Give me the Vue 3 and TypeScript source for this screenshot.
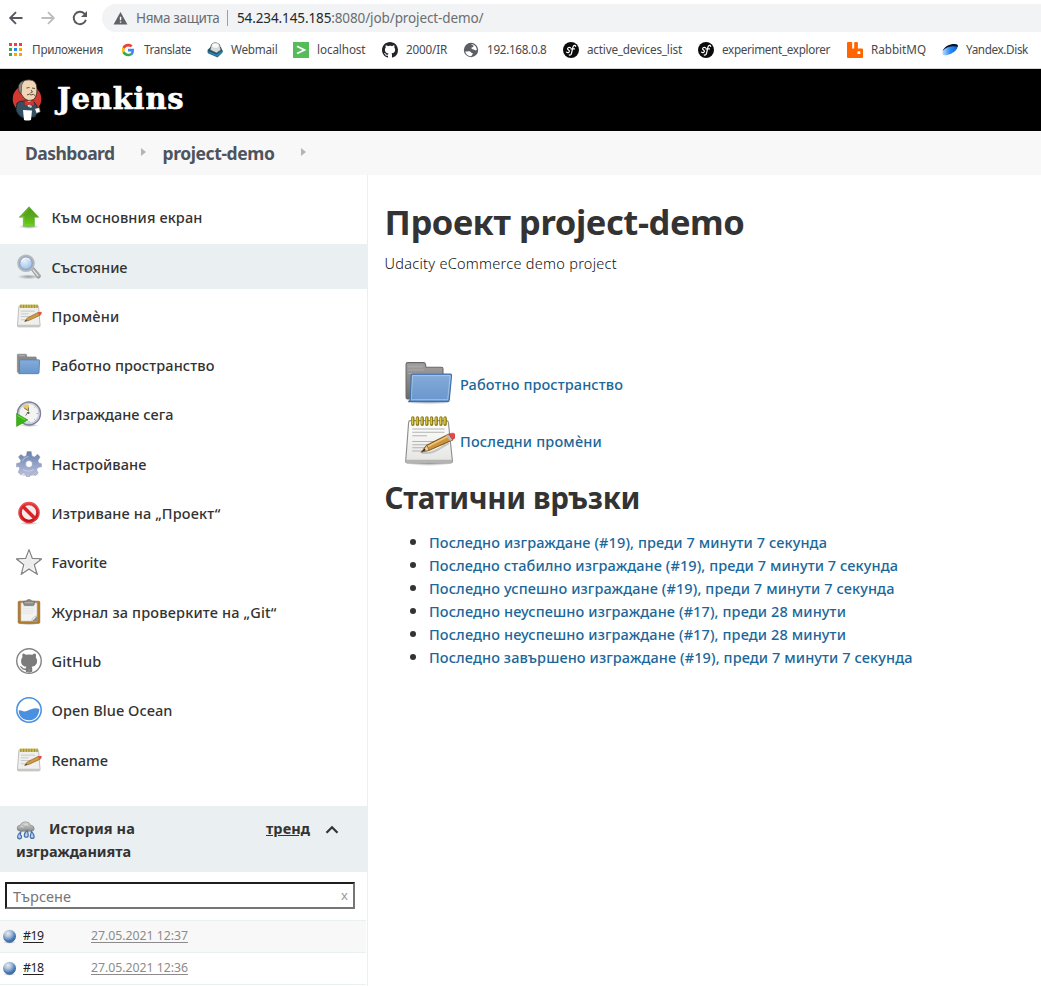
<script setup lang="ts">
interface Labelled {
  icon: string
  label: string
  width: number
}

const vFit = {
  mounted(el: HTMLElement, binding: { value: number }) {
    const count = (el.textContent ?? '').trim().length
    const natural = el.getBoundingClientRect().width
    el.style.letterSpacing = `${((binding.value - natural) / count).toFixed(4)}px`
  },
}

const bookmarks: Labelled[] = [
  { icon: 'apps', label: 'Приложения', width: 71 },
  { icon: 'google', label: 'Translate', width: 47 },
  { icon: 'webmail', label: 'Webmail', width: 46.5 },
  { icon: 'localhost', label: 'localhost', width: 48.5 },
  { icon: 'octocat', label: '2000/IR', width: 41 },
  { icon: 'globe', label: '192.168.0.8', width: 59.5 },
  { icon: 'symfony', label: 'active_devices_list', width: 95 },
  { icon: 'symfony', label: 'experiment_explorer', width: 108 },
  { icon: 'rabbit', label: 'RabbitMQ', width: 55 },
  { icon: 'yandex', label: 'Yandex.Disk', width: 62 },
]

const tasks: Labelled[] = [
  { icon: 'up', label: 'Към основния екран', width: 151 },
  { icon: 'search', label: 'Състояние', width: 76 },
  { icon: 'notepad-small', label: 'Промѐни', width: 68 },
  { icon: 'folder-small', label: 'Работно пространство', width: 163 },
  { icon: 'clock', label: 'Изграждане сега', width: 122 },
  { icon: 'gear', label: 'Настройване', width: 95 },
  { icon: 'stop', label: 'Изтриване на „Проект“', width: 169 },
  { icon: 'star', label: 'Favorite', width: 55.5 },
  { icon: 'clipboard', label: 'Журнал за проверките на „Git“', width: 225 },
  { icon: 'github', label: 'GitHub', width: 50 },
  { icon: 'ocean', label: 'Open Blue Ocean', width: 121 },
  { icon: 'notepad-small', label: 'Rename', width: 56.5 },
]

const shortcuts: Labelled[] = [
  { icon: 'folder', label: 'Работно пространство', width: 163 },
  { icon: 'notepad', label: 'Последни промѐни', width: 142 },
]

const permalinks = [
  { label: 'Последно изграждане (#19), преди 7 минути 7 секунда', width: 398 },
  { label: 'Последно стабилно изграждане (#19), преди 7 минути 7 секунда', width: 469 },
  { label: 'Последно успешно изграждане (#19), преди 7 минути 7 секунда', width: 465.5 },
  { label: 'Последно неуспешно изграждане (#17), преди 28 минути', width: 417 },
  { label: 'Последно неуспешно изграждане (#17), преди 28 минути', width: 417 },
  { label: 'Последно завършено изграждане (#19), преди 7 минути 7 секунда', width: 483.5 },
]

const builds = [
  { id: '#19', date: '27.05.2021 12:37' },
  { id: '#18', date: '27.05.2021 12:36' },
]
</script>

<template>
  <div class="page">
    <svg class="sprite" aria-hidden="true">
      <defs>
        <linearGradient id="gGreen" x1="0" y1="0" x2="0" y2="1"><stop offset="0" stop-color="#4c9c14" /><stop offset=".5" stop-color="#5aa81c" /><stop offset="1" stop-color="#63d411" /></linearGradient>
        <linearGradient id="gBlue" x1="0" y1="0" x2="0" y2="1"><stop offset="0" stop-color="#86abd9" /><stop offset="1" stop-color="#6796cd" /></linearGradient>
        <linearGradient id="gGrey" x1="0" y1="0" x2="0" y2="1"><stop offset="0" stop-color="#a2a2a2" /><stop offset="1" stop-color="#6a6a6a" /></linearGradient>
        <linearGradient id="gPaper" x1="0" y1="0" x2="0" y2="1"><stop offset="0" stop-color="#fff" /><stop offset="1" stop-color="#e4e4e2" /></linearGradient>
        <linearGradient id="gGear" x1="0" y1="0" x2="0" y2="1"><stop offset="0" stop-color="#6680aa" /><stop offset="1" stop-color="#bfc3e4" /></linearGradient>
        <linearGradient id="gRed" x1="0" y1="0" x2="0" y2="1"><stop offset="0" stop-color="#e23a3a" /><stop offset="1" stop-color="#c60f13" /></linearGradient>
        <linearGradient id="gCloud" x1="0" y1="0" x2="0" y2="1"><stop offset="0" stop-color="#dcdcda" /><stop offset="1" stop-color="#898b88" /></linearGradient>
        <radialGradient id="gLens" cx=".4" cy=".35" r=".7"><stop offset="0" stop-color="#e6f1fc" /><stop offset="1" stop-color="#8fb6e3" /></radialGradient>
        <radialGradient id="gBall" cx=".38" cy=".28" r=".8"><stop offset="0" stop-color="#e4ecec" /><stop offset=".35" stop-color="#a9c0d6" /><stop offset=".72" stop-color="#4377b4" /><stop offset="1" stop-color="#305e98" /></radialGradient>
        <radialGradient id="gShade"><stop offset="0" stop-color="#000" stop-opacity=".35" /><stop offset="1" stop-color="#000" stop-opacity="0" /></radialGradient>
        <linearGradient id="gDisk" x1="0" y1="0" x2="1" y2="0"><stop offset="0" stop-color="#c4e3ff" /><stop offset=".5" stop-color="#2f8cf5" /><stop offset="1" stop-color="#0763d8" /></linearGradient>
        <clipPath id="cRing"><circle cx="24" cy="24" r="21" /></clipPath>
      </defs>

      <symbol id="apps" viewBox="0 0 16 16">
        <path fill="#ea4335" d="M2 1h3v3H2zM7 1h3v3H7zM12 1h3v3h-3z" />
        <path fill="#34a853" d="M2 6h3v3H2zM2 11h3v3H2z" /><path fill="#2a84f0" d="M7 6h3v3H7z" />
        <path fill="#f9a602" d="M12 6h3v3h-3zM7 11h3v3H7zM12 11h3v3h-3z" />
      </symbol>
      <symbol id="google" viewBox="0 0 48 48">
        <path fill="#EA4335" d="M24 13.500c3.540 0 6.210 1.360 7.900 2.500l5.850-5.800C34.500 7.300 29.900 5.500 24 5.500c-7.500 0-13.700 4.300-16.600 10.400l6.800 5.200C15.700 16.700 19.500 13.500 24 13.500z" />
        <path fill="#4285F4" d="M42 24.500c0-1.400-.1-2.700-.4-4H24v8h10.300c-.5 2.400-1.900 4.300-3.900 5.700l6.500 5.100C40.400 35.800 42 30.600 42 24.500z" />
        <path fill="#FBBC05" d="M14.200 28c-.8-2.300-.8-4.700 0-6.900l-6.800-5.200c-2.400 5.400-2.400 11.900 0 17.300z" />
        <path fill="#34A853" d="M24 43c5.200 0 9.700-1.600 12.900-4.500l-6.500-5.100c-4.800 3.200-13.600 2.100-16.200-5.400l-6.800 5.200C10.300 39.100 16.600 43 24 43z" />
      </symbol>
      <symbol id="webmail" viewBox="0 0 16 16">
        <path d="M.6 8L4 4.500l10 .5 1.500 4.500-5 5.500L2 11z" fill="#14506f" /><path d="M.8 8.500l8.700 3.500 5.700-4 .1 2.500-4.800 4.500-9.500-4z" fill="#2686b8" stroke="#123f58" stroke-width=".5" />
        <path d="M3 8L4.500 2.500Q8-1 12.500 2.500L14 8l-4.500 3z" fill="#d5dadb" stroke="#4b5558" stroke-width=".7" /><ellipse cx="8.500" cy="3.500" rx="3.300" ry="2.300" fill="#f8f9f9" />
      </symbol>
      <symbol id="localhost" viewBox="0 0 16 16"><path fill="#56bb59" d="M0 0h16v16H0z" /><path d="M4 4.300l7.500 3.600L4 11.500" fill="none" stroke="#fff" stroke-width="1.700" /></symbol>
      <symbol id="octocat" viewBox="0 0 16 16"><path fill="#20262b" d="M8 0C3.580 0 0 3.580 0 8c0 3.540 2.290 6.530 5.470 7.590.4.070.55-.17.55-.38 0-.19-.01-.82-.01-1.490-2.010.37-2.530-.49-2.690-.94-.09-.23-.48-.94-.82-1.130-.28-.15-.68-.52-.01-.53.63-.01 1.080.58 1.230.82.72 1.210 1.870.87 2.330.66.07-.52.28-.87.51-1.070-1.780-.2-3.640-.89-3.640-3.950 0-.87.31-1.590.82-2.150-.08-.2-.36-1.020.08-2.120 0 0 .67-.21 2.200.82.64-.18 1.320-.27 2-.27s1.360.09 2 .27c1.530-1.040 2.200-.82 2.200-.82.44 1.100.16 1.920.08 2.120.51.56.82 1.270.82 2.150 0 3.070-1.870 3.750-3.650 3.950.29.25.54.73.54 1.480 0 1.070-.01 1.930-.01 2.200 0 .21.15.46.55.38A8.010 8.010 0 0 0 16 8c0-4.420-3.580-8-8-8z" /></symbol>
      <symbol id="globe" viewBox="0 0 16 16">
        <circle cx="8" cy="8" r="7.200" fill="#5b5f65" />
        <path d="M2.200 9.500c2 .2 2.500-.3 4-.2 1.800.2 1.500 1.700 3 1.800 1.200.1.300 1.700-.8 3-3.300.4-5.700-1.900-6.200-4.600zM8 2.300c.8 1 2.700.6 2.500 2-.2 1.300-2.300.7-2.100 2 .2 1.200 2.300.8 3.300 1.700.8.800 1.600.4 2.100-.2C13.700 4.600 11.300 2 8 2.300z" fill="#fff" />
      </symbol>
      <symbol id="symfony" viewBox="0 0 16 16">
        <circle cx="8" cy="8" r="8" fill="#0b0b0b" />
        <path d="M7.400 5.700c-1-.7-2.800-.1-2.800 1 0 1.300 2.100 1.200 1.800 2.700-.2 1.200-2 1.700-2.800.7M12.700 4.300c-.4-1.500-2.200-1.300-2.800.8L8.600 11c-.4 1.900-1.400 2.500-2.300 1.900M8 6.900h3.500" fill="none" stroke="#fff" stroke-width="1.200" stroke-linecap="round" />
      </symbol>
      <symbol id="rabbit" viewBox="0 0 16 16"><path fill="#ff6600" d="M0 1Q0 0 1 0h3.300q.9 0 .9 1v5.500h2V1q0-1 .9-1H10q.9 0 .9 1v5.500H15q1 0 1 1V15q0 1-1 1H1q-1 0-1-1z" /><rect x="10.500" y="9.300" width="2.800" height="2.800" rx=".6" fill="#fff" /></symbol>
      <symbol id="yandex" viewBox="0 0 16 16"><path d="M.2 11C.5 6 7 2.300 12.500 2.300c4.300 0 3.600 3.500 1.500 5.700C11 12 .2 16 .2 11z" fill="url(#gDisk)" /><path d="M.5 9C2.500 4.500 7.500 2 12.500 2c3 0 4 1.300 3 2.700-4-1.200-11-.5-15 4.300z" fill="#071321" /></symbol>

      <symbol id="up" viewBox="0 0 48 48"><ellipse cx="24" cy="42" rx="20" ry="4" fill="url(#gShade)" /><path d="M24 5L6 24.500h7.500V41h20.500V24.500h8z" fill="url(#gGreen)" stroke="#5ba52a" stroke-width="1" /><path d="M24 8L10 23h5v16h17" fill="none" stroke="#9bdc60" stroke-width="1.200" opacity=".6" /></symbol>
      <symbol id="search" viewBox="0 0 48 48">
        <ellipse cx="23" cy="42" rx="21" ry="4.500" fill="url(#gShade)" /><path d="M28 29l5-4 12 14q1 6-5 6z" fill="#a9a9a7" stroke="#888a85" /><path d="M31 29l10 12" stroke="#e8e8e8" stroke-width="2" />
        <circle cx="18.500" cy="17" r="14" fill="url(#gLens)" stroke="#b4b8bb" stroke-width="4.500" /><circle cx="18.500" cy="17" r="11.500" fill="none" stroke="#668dbd" stroke-width="1.200" /><path d="M10 14c3-7 11-8 16-2" fill="none" stroke="#fff" stroke-width="2" opacity=".7" />
      </symbol>
      <symbol id="notepad" viewBox="0 0 48 48">
        <ellipse cx="23" cy="45.500" rx="22" ry="2.500" fill="url(#gShade)" />
        <path d="M5 4.500h35q1.500 0 1.700 2L45.500 43q0 2-2 2h-41q-2 0-1.800-2L3.500 6q.2-1.500 1.500-1.500z" fill="url(#gPaper)" stroke="#8d8f8c" stroke-width="1.100" /><path d="M1 42h44v2q0 1.200-1.500 1.200H2.300q-1.500 0-1.300-1.400z" fill="#b4b4b2" />
        <path d="M7 12.500h31M7 15.500h31M7 19h14M7 24.500h31M7 27.500h31M7 30.500h19M7 33.500h12" stroke="#b2b4b1" />
        <path d="M7.500 2v6M12 2v6M16.500 2v6M21 2v6M25.500 2v6M30 2v6M34.500 2v6M38.500 2v6" stroke="#8c7a16" stroke-width="3.300" stroke-linecap="round" /><path d="M7.200 2v5.500M11.700 2v5.500M16.200 2v5.500M20.700 2v5.500M25.200 2v5.500M29.700 2v5.500M34.200 2v5.500M38.200 2v5.500" stroke="#dbc943" stroke-width="1.400" stroke-linecap="round" />
        <path d="M16 35q7 2 16-3l10-6" stroke="#777" stroke-width="2" opacity=".35" fill="none" />
        <path d="M16 34.500l5-6.500L42 17.500l3.500 5.500-22.500 10z" fill="#cc9538" stroke="#80551b" stroke-width="1" /><path d="M22 29.300L42 19" stroke="#efc880" stroke-width="1.500" /><path d="M16 34.500l5-6.500 2 5z" fill="#ead3aa" stroke="#80551b" stroke-width=".6" /><path d="M16 34.500l3-3.200.8 1.500z" fill="#222" /><path d="M39.500 18.800l2.700-1.300 3.500 5.300-2.500 1.200z" fill="#bbb" /><path d="M42 17.500q5-2.300 6.300.5 1 3-2.600 4.800z" fill="#e54848" stroke="#b32c2c" stroke-width=".5" />
      </symbol>
      <symbol id="notepad-small" viewBox="0 0 48 48">
        <path d="M7 5h33q1.500 0 1.700 2L44.500 42q0 2-2 2h-38q-2 0-1.800-2L5.300 7q.2-2 1.700-2z" fill="#efefed" stroke="#bcbcba" stroke-width="1.800" /><path d="M3 40h41v2.500q0 2-2 2H4.500q-2 0-1.700-2z" fill="#c6c6c4" />
        <path d="M7 3h33v6H7z" fill="#c9ba52" /><path d="M9 3v6M14 3v6M19 3v6M24 3v6M29 3v6M34 3v6M39 3v6" stroke="#a2932f" stroke-width="2" />
        <path d="M9 15h26M9 20h14M9 25h24M9 31h9" stroke="#c8c8c6" stroke-width="1.800" />
        <path d="M16 34l5-6.500 20-10 3.500 5-20.500 9.500z" fill="#d09b42" stroke="#9a6f2b" stroke-width="1.500" /><path d="M16 34l3-3.500 1.500 2z" fill="#333" /><path d="M40 17.500q6-3 7.500 0 .8 3-3.500 5.500z" fill="#e05544" />
      </symbol>
      <symbol id="folder" viewBox="0 0 48 48">
        <ellipse cx="23" cy="39.500" rx="23" ry="3.500" fill="url(#gShade)" /><path d="M2.700 2.500h15.500q1.300 0 1.500 2l.5 2.500H35q1.500 0 1.500 1.500V37.500h-34q-1.500 0-1.500-1.500V4q0-1.500 1.700-1.500z" fill="url(#gGrey)" stroke="#686868" /><path d="M3 6.500h14M3 9.500h15M3 13h32" stroke="#c1c1c1" opacity=".5" />
        <path d="M7.200 13.500h36.500q1 0 1 1.200L42.500 38q-.2 2-2 2H3.200q2-1 2.200-3L6 14.700q.1-1.200 1.200-1.200z" fill="url(#gBlue)" stroke="#3f6fae" stroke-width="1.100" /><path d="M7.200 15h36.200L41 38H6z" fill="none" stroke="#bfd5ef" stroke-width=".9" opacity=".65" />
      </symbol>
      <symbol id="folder-small" viewBox="0 0 48 48">
        <path d="M4 4h14q1.500 0 1.700 2l.5 3H36q1.500 0 1.500 1.500V38H4q-1.500 0-1.500-1.500v-31Q2.500 4 4 4z" fill="#8a8a8a" stroke="#777" /><path d="M5 7h12" stroke="#bbb" stroke-width="1.500" />
        <path d="M7.500 14.500h35q1 0 1 1.200L42.500 38q-.2 2-2 2H5q1.200-1 1.300-3l.2-21q.1-1.500 1-1.500z" fill="url(#gBlue)" stroke="#4f7db8" stroke-width="1.600" />
      </symbol>
      <symbol id="clock" viewBox="0 0 48 48">
        <ellipse cx="25" cy="45" rx="18" ry="3" fill="url(#gShade)" /><circle cx="24" cy="23" r="21" fill="#f3f3f1" stroke="#80829b" stroke-width="3" /><circle cx="24" cy="23" r="18.500" fill="none" stroke="#c8cadf" stroke-width="2.500" />
        <path d="M24 20L12 11q5-6 12-4z" fill="#e8cc60" /><path d="M15 13l8 5v-6M22 20l-4 7" fill="none" stroke="#666" stroke-width="1.600" /><circle cx="23" cy="22" r="2" fill="#555" />
        <path d="M24 37v3M38 23h3M34 12l2-2M34 34l2 2" stroke="#999" stroke-width="1.500" /><path d="M1 23l21 12L1 47z" fill="#36b513" stroke="#2d8b0b" /><path d="M3 27l14 8" stroke="#8ae362" stroke-width="1.500" />
      </symbol>
      <symbol id="gear" viewBox="0 0 48 48">
        <ellipse cx="24" cy="43.500" rx="20" ry="3.500" fill="url(#gShade)" />
        <path fill="url(#gGear)" stroke="#8791b6" stroke-width=".8" d="M20.500 1h7.500l1.500 8 4.500 2L40 6l4.500 5-4 7 1.500 4 5 1.500v5.500l-6.500 1.500-2.500 4 3 6-5 4.500-6.500-4-3.500 1.500-1 5.500h-5.500l-1-6-4-2-6 3.500-4.500-4.500 3-6.500-2-4L1 29.500V23l6.500-1.500L9 17.500 4.500 11 9 6.500l6 4 4-2z" />
        <circle cx="24" cy="24" r="6.500" fill="#fff" stroke="#8a96bb" stroke-width="1.200" /><path d="M12 18q4-7 11-8M13 34q10 6 20 0" fill="none" stroke="#e0e5f4" stroke-width="2" opacity=".5" />
      </symbol>
      <symbol id="stop" viewBox="0 0 48 48"><ellipse cx="24" cy="43" rx="18" ry="3" fill="url(#gShade)" /><circle cx="24" cy="23" r="16.500" fill="#f6eaea" stroke="url(#gRed)" stroke-width="6.500" /><path d="M12.500 11.500l23 23" stroke="#d72429" stroke-width="6.500" /><circle cx="24" cy="23" r="18.500" fill="none" stroke="#f29a9a" stroke-width=".9" opacity=".8" /></symbol>
      <symbol id="star" viewBox="0 0 48 48"><path d="M24 2l6 15.500 17 .8-13.500 10.500 5.500 17.500L24 36.800 10 46.300l4.500-17.500L1 18.300l17-.8z" fill="#ececec" stroke="#858585" stroke-width="2.600" /><path d="M24 6.500l4.600 13 13.500.6-10.800 8.400 3.800 13.400L24 34.300 12.900 42l3.900-13.500L6 20.100l13.500-.6z" fill="none" stroke="#fff" stroke-width="1.300" /></symbol>
      <symbol id="clipboard" viewBox="0 0 48 48">
        <ellipse cx="24" cy="46" rx="19" ry="2" fill="url(#gShade)" /><rect x="4" y="4" width="40" height="41" rx="2" fill="#b27b2d" stroke="#885b1a" /><path d="M9 7h30v34H9z" fill="#f3f3f2" stroke="#a8a8a5" /><path d="M12 14h23M12 18h21M12 22h23M12 26h20" stroke="#ddd" stroke-width="1.200" /><path d="M39 31l-10 10h10z" fill="#8b8d88" /><path d="M29 41q1-8 10-10" fill="#fff" stroke="#999" />
        <path d="M14 4h5q0-3 5-3t5 3h5v5q0 3-3 3H17q-3 0-3-3z" fill="#888a85" stroke="#646661" /><path d="M16 7h16" stroke="#c3c5c0" stroke-width="1.500" />
      </symbol>
      <symbol id="github" viewBox="0 0 48 48">
        <circle cx="24" cy="24" r="22.600" fill="#fff" stroke="#838383" stroke-width="2.600" />
        <g clip-path="url(#cRing)"><path d="M12 11q1-2 6 1.600 6-1.300 12 0Q35 9 36.500 11q1 3 0 6 4 5 1.500 12-2.500 5-9 5.500 1 2 1 5V46H18v-5.500q-6 1-8-3.500l-3-3q4-1 6 3 2 1.500 5 .8 0-2 1.500-3.300-7.500-.5-9.500-6-2-7 2-12-1-3 0-5.500z" fill="#7b7b7b" /><path d="M24 38v7" stroke="#9a9a9a" stroke-width="1.500" /></g>
      </symbol>
      <symbol id="ocean" viewBox="0 0 48 48"><circle cx="24" cy="24" r="22.500" fill="#fff" stroke="#4a90e2" stroke-width="2.800" /><path d="M5 25c5-2 7 4 15 1 7-3 14-7 23-4 0 12-8 21-19 21S5 36 5 25z" fill="#4a90e2" /></symbol>
      <symbol id="storm" viewBox="0 0 48 48">
        <path d="M11 26q-9-1-8-9 1-6 7-6Q14 2 24 2t13 9q8 0 9 8 0 7-8 7z" fill="url(#gCloud)" stroke="#777975" stroke-width="1.500" /><path d="M10 16q4-4 9 0M20 11q6-6 11 1" fill="none" stroke="#f4f4f4" stroke-width="2" opacity=".7" />
        <g fill="#b8d0ed" stroke="#4772aa" stroke-width="3"><path d="M12 28q-8 6-8 12a5 5 0 0 0 10 0q0-4-3-5zM28 24q-7 6-7 12a5 5 0 0 0 10 0q0-5-3-12zM39 26q-2 8-3 13a5 5 0 0 0 10 0q0-5-7-13z" /></g>
      </symbol>
      <symbol id="ball" viewBox="0 0 16 16"><ellipse cx="8" cy="14.200" rx="7" ry="1.600" fill="url(#gShade)" /><circle cx="8" cy="7.700" r="6.900" fill="url(#gBall)" /></symbol>
    </svg>

    <div class="browser">
      <div class="toolbar">
        <svg class="nav" viewBox="0 0 16 16"><path d="M14.500 8H2.500M8 2.200L2.200 8 8 13.800" /></svg>
        <svg class="nav faded" viewBox="0 0 16 16"><path d="M1.500 8h12M8 2.200L13.800 8 8 13.800" /></svg>
        <svg class="nav" viewBox="0 0 16 16"><path d="M13.900 9.800A6.200 6.200 0 1 1 12.400 3.600l1.300 1.500" /><path class="solid" d="M15 1v6H9z" /></svg>
        <div class="address">
          <svg class="warning" viewBox="0 0 16 14"><path d="M8 0l7.500 13.500H.500z" fill="#5f6368" /><path d="M7.300 5h1.500v4H7.300zm0 5.200h1.500v1.500H7.300z" fill="#fff" /></svg>
          <span v-fit="83.500" class="insecure">Няма защита</span>
          <span class="divider"></span>
          <span v-fit="246.500" class="url"><b>54.234.145.185</b>:8080/job/project-demo/</span>
        </div>
      </div>
      <nav class="bookmarks">
        <a v-for="mark in bookmarks" :key="mark.label" class="bookmark">
          <svg><use :href="`#${mark.icon}`" /></svg><span v-fit="mark.width">{{ mark.label }}</span>
        </a>
      </nav>
    </div>

    <header class="masthead">
      <svg class="butler" viewBox="0 0 30 42">
        <ellipse cx="15" cy="20" rx="14.300" ry="14" fill="#d33833" />
        <path d="M5 24q3-2.500 8-2l9 1q4 3 4 10l-3 5-12 1Q5 36 4 31z" fill="#335061" stroke="#15202a" stroke-width=".8" /><path d="M13 23l3.500 5 4-5-2.500-2z" fill="#fff" />
        <path d="M7.500 9Q9 .5 17 .8q8 0 8 9.200 0 8-3.500 10.500-5.500 2.500-9.500-1.500-3.500-3-4.500-10z" fill="#f0d6b7" stroke="#292522" stroke-width=".8" /><path d="M7.500 14Q4 4 12 1.500 8.500 6 9.500 11l-.5 3z" fill="#8a8a88" stroke="#333" stroke-width=".6" />
        <path d="M14.500 9l3-.5M20 9l3 .5M19 11l1.500 2-2 .8M15 16q3-2 4 0 2.500-2 4.500 1" fill="none" stroke="#513e2f" stroke-width=".9" /><path d="M12.500 21.500l4.500 1.500 5-1.500v5.500l-4.500-1.500-5 1.500z" fill="#d33833" stroke="#7d1d1a" stroke-width=".5" />
        <path d="M22.500 29.500l5-1 .8 4.500-4 1.500z" fill="#fff" stroke="#333" stroke-width=".7" /><path d="M11 31l9 .5-1 9.500q-4 1-7 0z" fill="#fff" /><circle cx="18.500" cy="27.500" r="1.300" fill="#c9d3dd" />
      </svg>
      <span v-fit="127.500" class="wordmark">Jenkins</span>
    </header>

    <div class="crumbs">
      <a v-fit="89.500">Dashboard</a><svg viewBox="0 0 5 8"><path d="M0 0l5 4-5 4z" /></svg>
      <a v-fit="112">project-demo</a><svg viewBox="0 0 5 8"><path d="M0 0l5 4-5 4z" /></svg>
    </div>

    <div class="columns">
      <aside class="side">
        <div class="tasks">
          <a v-for="(task, i) in tasks" :key="task.label" class="task" :class="{ active: i === 1 }">
            <svg><use :href="`#${task.icon}`" /></svg><span v-fit="task.width">{{ task.label }}</span>
          </a>
        </div>
        <section class="history">
          <div class="history-head">
            <div class="history-title">
              <svg><use href="#storm" /></svg><span v-fit="86">История на</span><br /><span v-fit="115">изгражданията</span>
            </div>
            <a v-fit="44" class="trend">тренд</a>
            <svg class="chevron" viewBox="0 0 14 10"><path d="M1.500 7.800L7 2.300l5.500 5.500" /></svg>
          </div>
          <div class="search"><span v-fit="58">Търсене</span><i>x</i></div>
          <div class="builds">
            <div v-for="build in builds" :key="build.id" class="build">
              <svg><use href="#ball" /></svg><a v-fit="20.500" class="number">{{ build.id }}</a><a v-fit="97" class="date">{{ build.date }}</a>
            </div>
          </div>
        </section>
      </aside>

      <main class="main">
        <h1><span v-fit="360">Проект project-demo</span></h1>
        <p><span v-fit="232.500">Udacity eCommerce demo project</span></p>
        <div class="shortcuts">
          <a v-for="link in shortcuts" :key="link.label" class="shortcut">
            <svg><use :href="`#${link.icon}`" /></svg><span v-fit="link.width">{{ link.label }}</span>
          </a>
        </div>
        <h2><span v-fit="255.500">Статични връзки</span></h2>
        <ul>
          <li v-for="(link, i) in permalinks" :key="i"><a v-fit="link.width">{{ link.label }}</a></li>
        </ul>
      </main>
    </div>
  </div>
</template>

<style>
body {
  background: #fff;
  overflow: hidden;
}
</style>

<style scoped>
.page {
  width: 1041px;
  height: 986px;
  overflow: hidden;
  background: #fff;
  color: #333;
  font-family: "Noto Sans", "Open Sans", sans-serif;
  font-size: 14.5px;
}
.page span,
.page a {
  white-space: nowrap;
}
.sprite {
  position: absolute;
  width: 0;
  height: 0;
}
.browser {
  height: 69px;
  box-sizing: border-box;
  border-bottom: 1px solid #d5d7da;
}
.toolbar {
  display: flex;
  align-items: center;
  height: 28px;
  padding: 4px 0 0 8px;
}
.nav {
  width: 16px;
  height: 16px;
  margin-right: 16px;
  fill: none;
  stroke: #55585d;
  stroke-width: 1.9;
}
.nav:nth-child(3) {
  margin-right: 14px;
}
.nav .solid {
  fill: #55585d;
  stroke: none;
}
.faded {
  stroke: #bbbdc0;
}
.address {
  display: flex;
  flex: 1;
  align-items: center;
  height: 28px;
  box-sizing: border-box;
  padding-left: 11px;
  border-radius: 14px 0 0 14px;
  background: #f1f3f4;
  color: #6a6e73;
  font-size: 13.5px;
}
.warning {
  width: 15px;
  height: 13px;
  margin-right: 8px;
}
.divider {
  width: 1px;
  height: 16px;
  margin: 0 9px 0 7.5px;
  background: #9b9ea2;
}
.url b {
  color: #25282c;
  font-weight: 400;
}
.bookmarks {
  display: grid;
  grid-template-columns: 113px 87px 86px 89px 81px 100px 135px 149px 95px 100px;
  align-items: center;
  height: 36px;
  padding-left: 7px;
  color: #46494d;
  font-size: 11.7px;
}
.bookmark {
  display: flex;
  align-items: center;
  gap: 8px;
}
.bookmark svg {
  flex: none;
  width: 16px;
  height: 16px;
}
.bookmark span {
  margin-top: -2px;
}
.bookmark:first-child {
  gap: 9px;
}
.masthead {
  display: flex;
  align-items: center;
  height: 62px;
  box-sizing: border-box;
  padding-left: 12px;
  background: #000;
  color: #fff;
}
.butler {
  width: 30px;
  height: 42px;
  margin-right: 15px;
}
.wordmark {
  padding-bottom: 2px;
  font: bold 29px/34px "DejaVu Serif", serif;
  -webkit-text-stroke: 0.6px #fff;
}
.crumbs {
  display: flex;
  align-items: center;
  height: 44px;
  padding-left: 25px;
  background: #f8f8f8;
  color: #4d545d;
  font-size: 17.5px;
  font-weight: 700;
}
.crumbs svg {
  width: 5px;
  height: 8px;
  margin: 0 17px 2px 26px;
  fill: #b4b4b4;
}
.columns {
  display: flex;
  height: 811px;
}
.side {
  width: 367px;
  flex: none;
  border-right: 1px solid #eaeff2;
}
.tasks {
  display: flex;
  flex-direction: column;
  gap: 4.31px;
  height: 631px;
  padding-top: 19.8px;
  box-sizing: border-box;
}
.task {
  display: flex;
  flex: none;
  align-items: center;
  gap: 9.5px;
  height: 45px;
  padding-left: 16px;
  font-weight: 500;
}
.task svg {
  width: 26px;
  height: 26px;
}
.active {
  background: #eaeff2;
}
.history-head {
  display: flex;
  height: 66px;
  box-sizing: border-box;
  padding: 11px 0 0 16px;
  background: #eaeff2;
  font-weight: 700;
  line-height: 23px;
}
.history-title {
  width: 250px;
}
.history-title svg {
  width: 19px;
  height: 19px;
  margin-right: 14px;
  vertical-align: -6px;
}
.history-title span {
  display: inline-block;
}
.trend {
  height: 23px;
  text-decoration: underline;
}
.chevron {
  width: 14px;
  height: 10px;
  margin: 8px 0 0 15px;
  fill: none;
  stroke: #333;
  stroke-width: 2.2;
}
.search {
  display: flex;
  align-items: center;
  justify-content: space-between;
  width: 350px;
  height: 27px;
  margin: 10px 0 11px 5px;
  box-sizing: border-box;
  padding: 1px 5px 0 6px;
  border: 2px solid;
  border-color: #1e1e1e #767676 #767676 #1e1e1e;
  color: #777;
}
.search i {
  margin-top: -2px;
  color: #999;
  font-size: 13px;
  font-style: normal;
}
.build {
  display: flex;
  align-items: center;
  width: 366px;
  height: 32px;
  box-sizing: border-box;
  border-top: 1px solid #eaeff2;
  font-size: 12.3px;
}
.build:first-child {
  background: #f8f8f8;
}
.build:last-child {
  height: 33px;
  border-bottom: 1px solid #eaeff2;
}
.build svg {
  width: 15px;
  height: 15px;
  margin: 0 6px 0 2px;
}
.build a {
  margin-top: -3px;
  text-decoration: underline;
  text-underline-offset: 2px;
}
.number {
  color: #222;
}
.build .date {
  margin-left: 47.5px;
  color: #8b8b8b;
}
.main {
  padding: 23px 0 0 16.5px;
}
h1,
h2,
p,
ul {
  margin: 0;
}
h1 {
  font-size: 34.5px;
  line-height: 48px;
}
p {
  margin-top: 6px;
  color: #111;
  font-weight: 350;
  line-height: 23px;
}
.shortcuts {
  padding: 85px 0 0 20.5px;
}
.shortcut {
  display: flex;
  align-items: center;
  gap: 5px;
  height: 50px;
  margin-bottom: 6px;
  color: #1c6799;
  font-weight: 500;
}
.shortcut:first-child span {
  margin-top: -3px;
}
.shortcut svg {
  flex: none;
  width: 50px;
  height: 50px;
}
h2 {
  margin-top: 12px;
  font-size: 29.5px;
  line-height: 40px;
}
ul {
  margin-top: 12px;
  padding-left: 44.5px;
}
li {
  height: 23px;
  line-height: 23px;
}
li::marker {
  font-size: 17px;
}
li a {
  color: #1c6799;
  font-weight: 500;
}
</style>
